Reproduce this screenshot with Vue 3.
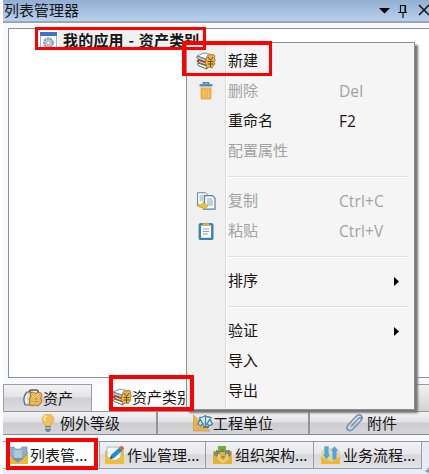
<script setup>
const menu = [
  { label: '新建', icon: 'books' },
  { label: '删除', icon: 'trash', key: 'Del', disabled: true },
  { label: '重命名', key: 'F2' },
  { label: '配置属性', disabled: true },
  { sep: true },
  { label: '复制', icon: 'copy', key: 'Ctrl+C', disabled: true },
  { label: '粘贴', icon: 'paste', key: 'Ctrl+V', disabled: true },
  { sep: true },
  { label: '排序', sub: true },
  { sep: true },
  { label: '验证', sub: true },
  { label: '导入' },
  { label: '导出' }
]
const bars = [
  { label: '例外等级', icon: 'bulb' },
  { label: '工程单位', icon: 'units' },
  { label: '附件', icon: 'clip' }
]
const views = [
  { label: '列表管...', icon: 'inbox' },
  { label: '作业管理...', icon: 'pencil' },
  { label: '组织架构...', icon: 'org' },
  { label: '业务流程...', icon: 'flow' }
]
</script>

<template>
  <div class="window">
    <svg class="defs" width="0" height="0">
      <symbol id="books" viewBox="0 0 20 18">
        <path d="M1 4 8 1l9 2-6 4.500z" fill="#fafcfd" stroke="#7b8b96" stroke-width=".9" />
        <path d="M1 4q-1 2 1 3l8 3V7z" fill="#b8c9d6" stroke="#596e7d" stroke-width=".8" />
        <path d="M2 7.500q-2 1.500 0 3l9 3.500v-3.500z" fill="#c9332b" stroke="#873430" stroke-width=".6" />
        <path d="M3 9.500 11 12.500" stroke="#f6e6dd" />
        <path d="M2 11q-1.500 2 1 3l8 3v-3z" fill="#f1f6f1" stroke="#377b55" stroke-width="1" />
        <path d="m11 4 2-1.500 1.500 1.300L17 2l2 2-1 2 1.500 2-1.500 2 1 2-2 2-1 2-2-1-3 1-1-3-1-2 1-3z" fill="#eeb842" stroke="#8b632a" stroke-width=".7" />
        <path d="m12 5 2.500 3.500L17 5m-2.500 3.500V15m-3-5.500h6m-6 2.500h6" fill="none" stroke="#704b1c" stroke-width="1" />
      </symbol>
      <symbol id="trash" viewBox="0 0 20 18">
        <path d="M7.500 2V.8h5V2" fill="none" stroke="#4d82a3" stroke-width="1.600" />
        <path d="M3.500 4.500V3q0-1 1-1h11q1 0 1 1v1.500z" fill="#5390b5" />
        <path d="M4.500 5.500h11v10.500q0 1.500-1.500 1.500H6q-1.500 0-1.500-1.500z" fill="#edaf4b" />
        <path d="M7.500 7.500v8M10 7.500v8m2.500-8v8" stroke="#f6cf83" stroke-width=".8" />
      </symbol>
      <symbol id="copy" viewBox="0 0 20 18">
        <path d="M1.500.7h8l2 2V14h-10z" fill="#f7fafc" stroke="#6088a8" />
        <path d="M3.500 4h4m-4 2h4m-4 2h4" stroke="#8fa9bb" />
        <path d="M8.500 3.700h8l2.500 2.500v11H8.500z" fill="#f9fbfc" stroke="#5682a5" stroke-width="1.200" />
        <path d="M11 7h5m-5 2h6m-6 2h6m-6 2h6" stroke="#87a8bf" />
        <path d="M1 11.500q2 2 6 1V10l5 4-5 4v-2.500q-5 .5-6-4z" fill="#efc537" stroke="#b48b23" stroke-width=".6" />
      </symbol>
      <symbol id="paste" viewBox="0 0 20 18">
        <rect x="3.800" y="2.200" width="12.500" height="14.800" rx="1" fill="#fff" stroke="#3c82ae" stroke-width="2.400" />
        <path d="M6.500 3.500V1.500h2q1.500-2 3 0h2v2z" fill="#d9ad50" />
        <path d="M7 7h6m-6 2.500h6M7 12h5" stroke="#8d9eab" />
      </symbol>
      <symbol id="gear" viewBox="0 0 17 17">
        <path d="M.5.500h16V17H.500z" fill="#f7f9fc" stroke="#a0b3cb" />
        <path d="M0 0h17v4H0z" fill="#4173ce" />
        <circle cx="8.500" cy="10.800" r="4.300" fill="#d7e2ec" stroke="#8297ae" stroke-width="2" stroke-dasharray="2.400 .6" />
        <circle cx="8.500" cy="10.800" r="2" fill="#fff" stroke="#8ba0b5" />
      </symbol>
      <symbol id="asset" viewBox="0 0 20 18">
        <path d="M7 4Q5 1 9 1h4q3 0 2 3" fill="none" stroke="#5d6163" stroke-width="1.600" />
        <path d="M4 3Q-1 8 2 16h6V3z" fill="#d6d8d9" stroke="#66696b" stroke-width="1.200" />
        <path d="M4.500 5Q2 9 4 14" fill="none" stroke="#fff" stroke-width="1.200" />
        <path d="m7 4 3-1 2 1.500L15 3l3 1 1 3-1.500 2L19 11l-1 3-3 3-3-1-3 1-3-2 1-3-1-2 2-3z" fill="#eeb43f" stroke="#946322" stroke-width=".8" />
        <path d="m9 5 4 4.500L17 5m-4 4.500V16m-4-6h8m-8 2.800h8" fill="none" stroke="#ffe9a5" stroke-width="2" />
        <path d="m9 5 4 4.500L17 5m-4 4.500V16m-4-6h8m-8 2.800h8" fill="none" stroke="#bd7b20" stroke-width=".9" />
      </symbol>
      <symbol id="bulb" viewBox="0 0 20 18">
        <path d="M7 12Q7 11 5.500 9C2 3.500 6 0 10 0s8 3.500 4.500 9Q13 11 13 12z" fill="#f3c158" stroke="#d5a046" stroke-width=".6" />
        <path d="M7 7q-2-4 2-5" fill="none" stroke="#fff0ae" stroke-width="1.500" />
        <path d="M7 12h6v4l-2 2H9l-2-2z" fill="#718493" />
        <path d="M7 14h6" stroke="#d9e2e6" />
      </symbol>
      <symbol id="units" viewBox="0 0 20 18">
        <path fill-rule="evenodd" d="M.500 1v16H17zM4 9.500l4 4.500H4z" fill="#efb34a" stroke="#c98b2d" stroke-width=".6" />
        <path d="M6 4q4-1 6-2 4 1 7 2M12.500 1v12M7 5l-2 5q2 3 5 0zm10 0-3 5q3 3 5.500 0z" fill="#dff1f5" fill-opacity=".7" stroke="#3788a6" stroke-width="1.300" />
        <path d="M10 13h6" stroke="#3788a6" stroke-width="2" />
      </symbol>
      <symbol id="clip" viewBox="0 0 20 18">
        <path d="m6.500 12 7-7.500c2-2 4 0 2.500 2l-8 8.500c-4 4-8-.5-5-4l8-8.500c4-3.500 8 0 5 4l-6 6.500" fill="none" stroke="#7695b6" stroke-width="1.700" stroke-linecap="round" />
      </symbol>
      <symbol id="inbox" viewBox="0 0 20 18">
        <path d="M0 6h20v12H0z" fill="#edb92f" />
        <path d="M1 1h5l1 2h6l1-2h5v8l-4 2v3l-5 3-5-3v-3L1 9z" fill="#8baecb" stroke="#6c93b4" stroke-width=".7" />
        <path d="M6 4h8v8H6z" fill="#adc7dc" />
        <path d="m0 10 5 3 5 4 5-4 5-3v8H0z" fill="#efb92c" />
        <path d="m5 11 2 1h6l2-1v2l-5 3-5-3z" fill="#6c94b8" />
      </symbol>
      <symbol id="pencil" viewBox="0 0 20 18">
        <path d="M0 5h19v13H0z" fill="#eab633" />
        <path d="M2 1h14v10l-6 4-8-4z" fill="#edf6fa" stroke="#a3bbc8" />
        <path d="m0 9 10 6 9-6v9H0z" fill="#f0bd38" />
        <path d="m5 13 1-4 9-8 3 3-9 8z" fill="#268bc9" />
        <path d="m14 2 2-2q3 0 3 3l-2 2z" fill="#d76340" />
        <path d="m5 13 1-3 2 2z" fill="#29485a" />
      </symbol>
      <symbol id="org" viewBox="0 0 20 18">
        <path d="M0 5h19v13H0z" fill="#e6b32e" />
        <path d="M5 0h8v4H5z" fill="#66b52f" />
        <path d="M9.500 3v3M3 5h14M4 5v4m12-4v4" stroke="#667768" stroke-width="1.600" />
        <path d="M1 6h6v3q-3 3-6 0zm11 0h6v3q-3 3-6 0z" fill="#7f8985" />
        <path d="M6 8v5l4 3 4-3V8" fill="none" stroke="#ead590" stroke-width="1.800" />
        <path d="M8 10h4l-2 3z" fill="#788d8a" />
      </symbol>
      <symbol id="flow" viewBox="0 0 20 18">
        <path d="M0 6h19v12H0z" fill="#e7ae29" />
        <path d="m0 6 4-4h11l4 4v5l-9 5-10-5z" fill="#f5d16b" />
        <path d="M3 0h5v8h2l-4.500 6L1 8h2zm8 14V5H9l4.500-5L18 5h-2v9z" fill="#51a7dc" stroke="#e1f3fa" stroke-width=".6" />
        <path d="m0 11 10 5 9-5v7H0z" fill="#efb831" />
      </symbol>
    </svg>

    <header class="title">
      <span>列表管理器</span>
      <svg class="controls" width="52" height="20" viewBox="0 0 52 20">
        <path d="M2 8h11l-5.500 5.500z" />
        <path d="M23.500 12V5.500h5V12M21 12.500h9M26 13v5M28 6v6" fill="none" stroke="#111" stroke-width="1.200" />
        <path d="m42 5 10 10m0-10L42 15" fill="none" stroke="#111" stroke-width="1.500" />
      </svg>
    </header>

    <main class="tree">
      <div class="node">
        <svg width="17" height="17"><use href="#gear" /></svg>
        <span>我的应用 - 资产类别</span>
      </div>
    </main>

    <nav class="tabs">
      <div class="tab"><svg class="icon"><use href="#asset" /></svg><span>资产</span></div>
      <div class="tab active"><svg class="icon"><use href="#books" /></svg><span>资产类别</span></div>
      <div class="rest"></div>
    </nav>
    <div class="bars">
      <div v-for="b in bars" :key="b.label" class="bar" :class="b.icon">
        <svg class="icon"><use :href="'#' + b.icon" /></svg><span>{{ b.label }}</span>
      </div>
    </div>
    <nav class="views">
      <div v-for="(v, i) in views" :key="v.label" class="view" :class="{ selected: i === 0, wide: i > 1 }">
        <svg class="icon"><use :href="'#' + v.icon" /></svg><span>{{ v.label }}</span>
      </div>
    </nav>

    <div class="menu">
      <template v-for="(m, i) in menu" :key="i">
        <div v-if="m.sep" class="sep"></div>
        <div v-else class="item" :class="{ disabled: m.disabled }">
          <span class="slot"><svg v-if="m.icon" class="icon"><use :href="'#' + m.icon" /></svg></span>
          <span class="label">{{ m.label }}</span>
          <span class="key">{{ m.key }}</span>
          <svg v-if="m.sub" class="arrow" width="6" height="9"><path d="M0 0 5 4.500 0 9z" /></svg>
        </div>
      </template>
    </div>

    <i class="mark mark-node"></i>
    <i class="mark mark-new"></i>
    <i class="mark mark-tab"></i>
    <i class="mark mark-view"></i>
    <svg class="cursor" width="4" height="6"><path d="M3 0v5M0 3h4" stroke="#777" /></svg>
  </div>
</template>

<style>
body { margin: 0; background: #fff; }
</style>

<style scoped>
.window {
  position: relative;
  box-sizing: border-box;
  width: 429px;
  height: 474px;
  overflow: hidden;
  padding-left: 3px;
  background: linear-gradient(90deg, #fff 3px, #f8f9fc 3px);
  font: 15px/20px "Noto Sans CJK SC", sans-serif;
  color: #151515;
  white-space: nowrap;
}
.defs { position: absolute; }
.icon { width: 20px; height: 18px; flex: none; }
.title {
  box-sizing: border-box;
  height: 23px;
  display: flex;
  justify-content: space-between;
  padding-left: 1px;
  border-bottom: 2px solid #9da5b2;
  background: linear-gradient(#91afd2, #b9d0ee);
}
.tree {
  box-sizing: border-box;
  height: 350px;
  margin: 5px 0 0 5px;
  padding: 1px 0 0 31px;
  border: 1px solid #8c919b;
  border-right: 0;
  background: #fff;
}
.node {
  display: flex;
  align-items: center;
  gap: 6px;
  width: 166px;
  height: 20px;
  background: linear-gradient(90deg, #fff 18px, #f0f0f0 18px);
  font-weight: bold;
  letter-spacing: .2px;
  word-spacing: 1px;
}
.tabs { display: flex; height: 27px; margin-top: 6px; }
.tab {
  box-sizing: border-box;
  width: 89px;
  display: flex;
  align-items: center;
  padding: 0 0 1px 19px;
  border: 1px solid #9a9ca4;
  border-bottom: 0;
  background: linear-gradient(#f4f4f5, #e4e4e6 45%, #d0d0d3 50%, #dedee0);
}
.tab.active { width: 96px; padding: 0 0 1px 20px; border: 0; background: #fff; }
.rest { flex: 1; border-top: 1px solid #9a9ca4; background: linear-gradient(#f1f1f1, #d4d4d6); }
.bars { display: grid; grid-template-columns: 155px 152px 119px; height: 24px; border-bottom: 1px solid #858993; box-sizing: border-box; }
.bar {
  display: flex;
  align-items: center;
  padding: 0 0 1px 35px;
  border-top: 1px solid #92959d;
  border-right: 2px solid #92959d;
  background: linear-gradient(#f3f3f4, #e2e2e5 45%, #cdcdd1 50%, #d6d6d9);
}
.bar:last-child { border-right: 0; }
.bar span { margin-left: 2px; }
.bar.units span { margin-left: 0; }
.views {
  display: grid;
  grid-template-columns: 97px 106px 108px 108px;
  height: 28px;
  margin-top: 6px;
  box-sizing: border-box;
  border-top: 1px solid #9598a1;
  background: #e7ebf8;
  box-shadow: 0 8px #e7ebf8;
}
.view {
  box-sizing: border-box;
  display: flex;
  align-items: center;
  gap: 2px;
  padding: 0 0 1px 5px;
  border-right: 1px solid #999ca4;
  border-bottom: 1px solid #999ca4;
  background: linear-gradient(#f2f2f4, #e8e8eb 45%, #d8d8dc 50%, #e3e3e6);
}
.view.wide { padding-left: 7px; }
.view.selected { background: #fff; }
.menu {
  position: absolute;
  left: 186px;
  top: 42px;
  box-sizing: border-box;
  width: 229px;
  height: 368px;
  padding: 3px 4px 4px 2px;
  border: 1px solid #8d8d8d;
  background: linear-gradient(90deg, #f0f0f0 38px, #dedede 38px, #dedede 39px, #fff 39px, #fff 40px, #f5f5f5 40px);
  box-shadow: 3px 3px 2px #777;
}
.item { display: flex; align-items: center; height: 30px; }
.slot { width: 39px; display: flex; padding-left: 7px; box-sizing: border-box; flex: none; }
.label { width: 111px; padding-bottom: 2px; }
.key { width: 55px; padding-bottom: 1px; font: 15.5px/20px "Open Sans", sans-serif; letter-spacing: .1px; }
.disabled { color: #a2a2a2; }
.sep { height: 20px; display: flex; align-items: center; }
.sep::after { content: ""; width: 180px; height: 1px; margin: 2px 0 0 39px; border-bottom: 1px solid #fff; background: #dedede; }
.mark { position: absolute; box-sizing: border-box; border: 3px solid #fe0000; }
.mark-node { left: 35px; top: 27px; width: 171px; height: 23px; }
.mark-new { left: 182px; top: 41px; width: 90px; height: 35px; border-width: 4px 3px 3px 4px; }
.mark-tab { left: 109px; top: 375px; width: 85px; height: 36px; border-width: 4px; }
.mark-view { left: 6px; top: 438px; width: 92px; height: 32px; border-width: 4px; }
.cursor { position: absolute; right: 0; bottom: 0; }
</style>
